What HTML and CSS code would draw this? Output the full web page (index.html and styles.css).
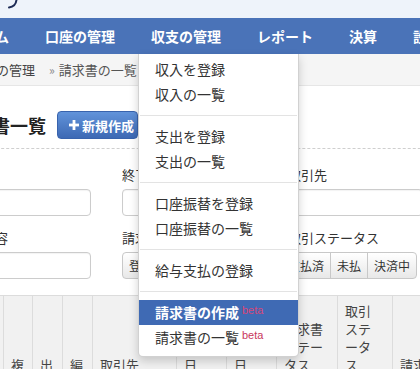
FILE: index.html
```html
<!DOCTYPE html>
<html lang="ja">
<head>
<meta charset="utf-8">
<title>請求書一覧</title>
<link rel="stylesheet" href="styles.css">
</head>
<body>
<div class="topbar">
  <svg class="logo" width="30" height="18" viewBox="0 0 30 18"><path d="M16.5 0 C16 4 13.5 7 9 7.5" stroke="#1d2b55" stroke-width="2" fill="none" stroke-linecap="round"/></svg>
</div>
<nav class="navbar">
  <span class="nav-item first">ム</span>
  <span class="nav-item">口座の管理</span>
  <span class="nav-item">収支の管理</span>
  <span class="nav-item">レポート</span>
  <span class="nav-item">決算</span>
  <span class="nav-item">設定</span>
</nav>
<div class="main">
  <div class="breadcrumb">
    <span class="crumb">収支の管理</span><span class="sep">»</span><span class="crumb current">請求書の一覧</span>
  </div>
  <div class="content">
    <div class="title-row">
      <h1 class="title">請求書一覧</h1>
      <a class="btn-new"><svg class="plus" width="10" height="10" viewBox="0 0 10 10"><rect x="3.6" y="0" width="2.8" height="10" fill="#fff"/><rect x="0" y="3.6" width="10" height="2.8" fill="#fff"/></svg>新規作成</a>
    </div>
    <div class="dashed"></div>
    <div class="filters">
      <div class="field"><label class="label">開始日</label><div class="input"></div></div>
      <div class="field"><label class="label">終了日</label><div class="input"></div></div>
      <div class="field"><label class="label">取引先</label><div class="input"></div></div>
      <div class="field"><label class="label">取引内容</label><div class="input"></div></div>
      <div class="field"><label class="label">請求書ステータス</label>
        <div class="btn-group"><span class="btn">登録済</span><span class="btn">送付済</span></div>
      </div>
      <div class="field"><label class="label">取引ステータス</label>
        <div class="btn-group shift"><span class="btn">支払済</span><span class="btn">未払</span><span class="btn">決済中</span></div>
      </div>
    </div>
    <table class="list">
      <thead>
        <tr>
          <th class="c0">番号</th>
          <th class="c1">複</th>
          <th class="c2">出</th>
          <th class="c3">編</th>
          <th class="c4">取引先</th>
          <th class="c5">発行日</th>
          <th class="c6">支払日</th>
          <th class="c7">請求書ステータス</th>
          <th class="c8">取引ステータス</th>
          <th class="c9">請求額</th>
        </tr>
      </thead>
    </table>
  </div>
</div>
<ul class="dropdown">
  <li class="item">収入を登録</li>
  <li class="item">収入の一覧</li>
  <li class="divider"></li>
  <li class="item">支出を登録</li>
  <li class="item">支出の一覧</li>
  <li class="divider"></li>
  <li class="item">口座振替を登録</li>
  <li class="item">口座振替の一覧</li>
  <li class="divider"></li>
  <li class="item">給与支払の登録</li>
  <li class="divider"></li>
  <li class="item active">請求書の作成<span class="beta">beta</span></li>
  <li class="item">請求書の一覧<span class="beta">beta</span></li>
</ul>
</body>
</html>
```
FILE: styles.css
```css
* { box-sizing: border-box; }
html, body { margin: 0; padding: 0; }
body {
  width: 420px;
  height: 369px;
  overflow: hidden;
  position: relative;
  background: #fff;
  color: #333;
  font-family: "Noto Sans CJK JP", "Liberation Sans", sans-serif;
  font-size: 13px;
}
.topbar {
  height: 18px;
  background: #eef3fa;
}
.logo { display: block; }
.navbar {
  height: 36px;
  background: #4a73b8;
  display: flex;
  align-items: center;
  gap: 36px;
  color: #fff;
  font-weight: bold;
  font-size: 14px;
  white-space: nowrap;
  overflow: hidden;
}
.nav-item.first { margin-left: -5px; }
.main {
  margin-left: -44px;
  width: 520px;
}
.breadcrumb {
  height: 32px;
  background: #f5f5f5;
  border-bottom: 1px solid #e6e6e6;
  display: flex;
  align-items: center;
  padding-left: 14px;
  font-size: 13px;
  color: #444;
}
.sep { color: #888; font-size: 12px; margin: 0 4px 0 14px; }
.crumb.current { color: #555; }
.title-row {
  display: flex;
  align-items: center;
  padding-top: 25px;
}
.title {
  margin: 0 11px 0 0;
  font-size: 18px;
  line-height: 28px;
  font-weight: bold;
  color: #222;
}
.btn-new {
  display: flex;
  align-items: center;
  height: 28px;
  padding: 0 3px 0 11px;
  border-radius: 4px;
  border: 1px solid #3863ad;
  background: linear-gradient(#6193da, #3d69b4);
  color: #fff;
  font-weight: bold;
  font-size: 13px;
  white-space: nowrap;
}
.plus { margin-right: 3px; }
.dashed {
  margin-top: 9px;
  border-top: 1px dashed #cfcfcf;
}
.filters {
  margin-top: 16px;
  display: grid;
  grid-template-columns: 135px 135px 135px;
  column-gap: 31px;
  row-gap: 12px;
}
.field { display: flex; flex-direction: column; }
.label {
  font-size: 13px;
  line-height: 20px;
  margin-bottom: 4px;
  color: #333;
  white-space: nowrap;
}
.input {
  height: 27px;
  border: 1px solid #cccccc;
  border-radius: 4px;
  background: #fff;
  box-shadow: inset 0 1px 1px rgba(0,0,0,0.05);
}
.btn-group { display: flex; height: 27px; white-space: nowrap; }
.btn-group.shift { margin-left: -7px; }
.btn {
  display: flex;
  align-items: center;
  padding: 0 6px;
  border: 1px solid #c8c8c8;
  margin-left: -1px;
  background: linear-gradient(#ffffff, #e8e8e8);
  font-size: 12px;
  color: #333;
}
.btn:first-child { margin-left: 0; border-radius: 4px 0 0 4px; }
.btn:last-child { border-radius: 0 4px 4px 0; }
.list {
  margin-top: 16px;
  border-collapse: collapse;
  table-layout: fixed;
  width: 516px;
}
.list th {
  background: #f1f1f1;
  border: 1px solid #dcdcdc;
  border-bottom: none;
  font-weight: normal;
  font-size: 13px;
  line-height: 18px;
  color: #444;
  text-align: left;
  vertical-align: bottom;
  padding: 6px 9px 8px 7px;
}
.c0 { width: 47px; }
.c1 { width: 29px; }
.c2 { width: 30px; }
.c3 { width: 30px; }
.c4 { width: 84px; }
.c5 { width: 50px; }
.c6 { width: 50px; }
.c7 { width: 61px; }
.c8 { width: 55px; }
.c9 { width: 80px; }
.dropdown {
  position: absolute;
  left: 138px;
  top: 54px;
  width: 161px;
  margin: 0;
  padding: 3px 0 6px;
  list-style: none;
  background: #fff;
  border: 1px solid rgba(0,0,0,0.18);
  border-top: none;
  border-radius: 0 0 5px 5px;
  box-shadow: 0 4px 10px rgba(0,0,0,0.18);
  z-index: 10;
}
.item {
  height: 25px;
  line-height: 25px;
  padding: 0 16px;
  font-size: 14px;
  color: #333;
  white-space: nowrap;
}
.item.active {
  background: #3f6ab4;
  color: #fff;
  font-weight: bold;
}
.divider {
  height: 1px;
  margin: 8px 1px;
  background: #e3e3e3;
}
.beta {
  font-family: "Liberation Sans", sans-serif;
  font-size: 11px;
  font-weight: normal;
  color: #c8375d;
  margin-left: 3px;
  vertical-align: 4px;
  line-height: 1;
}
.item.active .beta { color: #d8477a; }
```
